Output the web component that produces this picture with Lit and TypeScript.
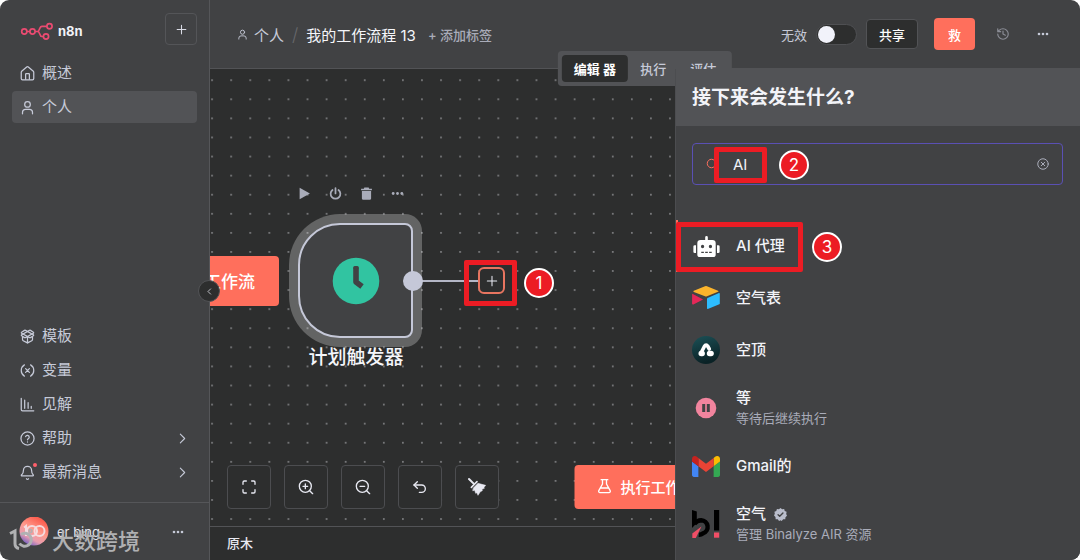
import { LitElement, html, svg, css } from "lit";
import { customElement, property } from "lit/decorators.js";

const icons: Record<string, unknown> = {
  home: svg`<path d="M15 21v-8a1 1 0 0 0-1-1h-4a1 1 0 0 0-1 1v8"/><path d="M2 10a2 2 0 0 1 .7-1.500l8-7a2 2 0 0 1 2.600 0l8 7A2 2 0 0 1 22 10v10a2 2 0 0 1-2 2H4a2 2 0 0 1-2-2z"/>`,
  user: svg`<circle cx="12" cy="7" r="4.500"/><path d="M4 22v-2a5 5 0 0 1 5-5h6a5 5 0 0 1 5 5v2"/>`,
  package: svg`<path d="M12 22v-9"/><path d="M15.200 2.200a1.700 1.700 0 0 1 1.600 0l4.600 2.900a1 1 0 0 1 0 1.700L8.800 13.800a1.900 1.900 0 0 1-1.600 0L2.600 10.900a1 1 0 0 1 0-1.700z"/><path d="M20 13v3.900a2 2 0 0 1-1.100 1.800l-6 3.100a1.900 1.900 0 0 1-1.800 0l-6-3.100A2.100 2.100 0 0 1 4 16.900V13"/><path d="M21.400 10.900a1 1 0 0 0 0-1.700L8.800 2.200a1.700 1.700 0 0 0-1.600 0L2.600 5.100a1 1 0 0 0 0 1.700l12.600 7a1.900 1.900 0 0 0 1.600 0z"/>`,
  variable: svg`<path d="M7 21s-5-3-5-9 5-9 5-9M17 3s5 3 5 9-5 9-5 9M15 9l-6 6M9 9l6 6"/>`,
  chart: svg`<path d="M2 2v18a2 2 0 0 0 2 2h18M7.500 18V5M13 18V9M18 18v-3"/>`,
  help: svg`<circle cx="12" cy="12" r="10.500"/><path d="M9 9a3 3 0 0 1 5.800 1c0 2-2.800 2.500-2.800 4M12 17.500v.1"/>`,
  bell: svg`<path d="M10.300 22a2 2 0 0 0 3.400 0M2.800 15.500A1 1 0 0 0 3.500 17.500h17a1 1 0 0 0 .7-1.700C19.400 14.500 18.500 13 18.500 8.500A6.500 6.500 0 0 0 5.500 8.500c0 4.500-1.400 6-2.700 7"/>`,
  right: svg`<path d="m8 4 8 8-8 8"/>`,
  left: svg`<path d="m15 5-7 7 7 7"/>`,
  plus: svg`<path d="M4 12h16M12 4v16"/>`,
  dots: svg`<g fill="currentColor" stroke="none"><circle cx="4" cy="12" r="2.600"/><circle cx="12" cy="12" r="2.600"/><circle cx="20" cy="12" r="2.600"/></g>`,
  history: svg`<path d="M3 12a9 9 0 1 0 9-9 9.800 9.800 0 0 0-6.700 2.700L3 8M3 3v5h5M12 7v5l4 2"/>`,
  fit: svg`<path d="M3 8V5a2 2 0 0 1 2-2h3M16 3h3a2 2 0 0 1 2 2v3M21 16v3a2 2 0 0 1-2 2h-3M8 21H5a2 2 0 0 1-2-2v-3"/>`,
  zoomIn: svg`<circle cx="11" cy="11" r="9"/><path d="m22 22-4.500-4.500M11 7.500v7M7.500 11h7"/>`,
  zoomOut: svg`<circle cx="11" cy="11" r="9"/><path d="m22 22-4.500-4.500M7.500 11h7"/>`,
  undo: svg`<path d="M8 14 3 9l5-5"/><path d="M3 9h11.500a5.500 5.500 0 0 1 0 11H11"/>`,
  broom: svg`<path d="m0 0 7 7" stroke-width="3"/><path d="M3.500 12.500 12 4" stroke-width="2.400"/><path d="M6.500 13.500 13.500 6.500 25 9.500l-2.500 3 .5 1.500-3.500 1.500.5 2-3 1.500L13.500 24.500l-1.800-4-1.700 1-1.500-4.500-2.500.5z" fill="currentColor" stroke-width="0.800"/>`,
  flask: svg`<path d="M9 2.500v6.500L3.500 19a2 2 0 0 0 1.800 3h13.400a2 2 0 0 0 1.800-3L15 9V2.500M7 2.500h10M6.500 15h11"/>`,
  play: svg`<path d="M3 1.500v21l19-10.500z" fill="currentColor" stroke="none"/>`,
  power: svg`<path d="M12 2v10" stroke-width="3.200"/><path d="M6.500 5.500a9 9 0 1 0 11 0" stroke-width="3.200"/>`,
  trash: svg`<g fill="currentColor" stroke="none"><path d="M8 1h8l1 2h5v3H2V3h5z"/><path d="M3.500 7.500h17V21a2.500 2.500 0 0 1-2.500 2.500H6A2.500 2.500 0 0 1 3.500 21z"/></g>`,
  search: svg`<circle cx="11" cy="11" r="8.500"/><path d="m22 22-5-5"/>`,
  clear: svg`<circle cx="12" cy="12" r="10.500"/><path d="m8.500 8.500 7 7M15.500 8.500l-7 7"/>`,
  verified: svg`<path fill="currentColor" stroke="none" d="m12 0 3 2.400 3.800-.5 1 3.600 3.500 1.600L22.500 11l1.500 3.400-2.800 2.600-.4 3.800-3.900.1L14.200 24 12 22.500 9.300 24 7 20.900l-3.900-.3-.4-3.800L0 14l1.500-3.400L.8 7l3.400-1.500 1.200-3.700 3.700.6z"/><path d="m7.500 12.300 3 3 6-6" stroke="#414244" stroke-width="2.500"/>`,
};

const logos: Record<string, unknown> = {
  robot: svg`<svg viewBox="0 0 640 512" width="27" height="21" fill="#fff"><path d="M32 224H64V416H32A32 32 0 0 1 0 384V256A32 32 0 0 1 32 224Zm512-48V448a64 64 0 0 1-64 64H160a64 64 0 0 1-64-64V176a80 80 0 0 1 80-80H288V32a32 32 0 0 1 64 0V96H464A80 80 0 0 1 544 176ZM264 256a40 40 0 1 0-40 40A40 40 0 0 0 264 256Zm-8 128H192v32h64Zm96 0H288v32h64ZM456 256a40 40 0 1 0-40 40A40 40 0 0 0 456 256Zm-8 128H384v32h64ZM640 256V384a32 32 0 0 1-32 32H576V224h32A32 32 0 0 1 640 256Z"/></svg>`,
  airtable: svg`<svg viewBox="0 0 28 28" width="28" height="28"><path fill="#fcb42c" d="M1.800 6.800 13 2.300a3 3 0 0 1 2 0l11 4.400c.6.300.6.900 0 1.100L15 12.300a3 3 0 0 1-2 0L1.800 7.900c-.6-.3-.6-.9 0-1.100z"/><path fill="#2dbdff" d="M15 14.800v9.500c0 .5.4.7.8.6l11.500-4.700c.4-.1.500-.4.500-.7v-9.800c0-.5-.4-.7-.8-.6l-11.500 4.800z"/><path fill="#f82b60" d="M.2 9.800v10c0 .6.500.8 1 .6l9.800-5z"/><path fill="#ba1e45" d="m.2 9.800 10.800 5.600-3.700 1.700L1 20.400z" opacity=".3"/></svg>`,
  airtop: svg`<svg viewBox="0 0 28 28" width="28" height="28"><defs><linearGradient id="sea" x1="0" y1="0" x2="0.300" y2="1"><stop offset="0" stop-color="#1c5157"/><stop offset="1" stop-color="#0a2226"/></linearGradient></defs><circle cx="14" cy="14" r="14" fill="url(#sea)"/><path d="M9 17 12.600 10a1.700 1.700 0 0 1 3 0l1.700 3" fill="none" stroke="#fff" stroke-width="3.600" stroke-linecap="round" stroke-linejoin="round"/><path d="M9.200 17.500h1" stroke="#fff" stroke-width="5.400" stroke-linecap="round"/><rect x="14.800" y="14.800" width="7" height="5.400" rx="2.700" fill="#fff"/></svg>`,
  wait: svg`<svg viewBox="0 0 28 28" width="28" height="28"><circle cx="14" cy="14" r="10.300" fill="#f1849e"/><path d="M11.700 10v8M16.300 10v8" stroke="#414244" stroke-width="3"/></svg>`,
  gmail: svg`<svg viewBox="52 42 88 66" width="28" height="21"><path fill="#4285f4" d="M58 108h14V74L52 59v43c0 3.320 2.690 6 6 6"/><path fill="#34a853" d="M120 108h14c3.320 0 6-2.690 6-6V59l-20 15"/><path fill="#fbbc04" d="M120 48v26l20-15v-8c0-7.420-8.470-11.650-14.400-7.200"/><path fill="#ea4335" d="M72 74V48l24 18 24-18v26L96 92"/><path fill="#c5221f" d="M52 51v8l20 15V48l-5.600-4.200c-5.940-4.450-14.400-.22-14.400 7.200"/></svg>`,
  binalyze: svg`<svg viewBox="0 0 28 28" width="28" height="28"><path d="M0 0 4.800 1.500V13L0 18z" fill="#000"/><path d="M2.300 14Q5 10.200 9.200 10.200a6.700 6.700 0 0 1 2 13Q9 25 6.800 24.800" fill="none" stroke="#000" stroke-width="4.400"/><path fill="#f04e66" d="M9.500 16.500.3 23.500V28h3.500z"/><path fill="#000" d="M22 0h5.200v20.500H22z"/><path fill="#f04e66" d="M22 22.500h5.200v5.200H22z"/></svg>`,
};

@customElement("ui-icon")
class UiIcon extends LitElement {
  @property() name = "";
  @property({ type: Number }) size = 16;
  @property({ type: Number }) weight = 2;
  static styles = css`
    :host { display: inline-flex; flex: none; }
    svg { display: block; overflow: visible; }
  `;
  render() {
    return html`<svg viewBox="0 0 24 24" width=${this.size} height=${this.size} fill="none" stroke="currentColor"
      stroke-width=${this.weight} stroke-linecap="round" stroke-linejoin="round" aria-hidden="true">${icons[this.name]}</svg>`;
  }
}

@customElement("side-bar")
class SideBar extends LitElement {
  static styles = css`
    :host { display: flex; flex-direction: column; box-sizing: border-box; background: #414244; border-right: 1px solid #555659; color: #c6cad8; position: relative; min-width: 0; }
    .top { display: flex; align-items: center; justify-content: space-between; padding: 13px 12px 12px 20px; }
    .brand { display: flex; align-items: center; gap: 4px; font-size: 13px; font-weight: 700; color: #f2f3f8; padding-top: 4px; }
    .add { width: 32px; height: 32px; display: grid; place-items: center; padding: 0; color: #d8dae4; background: none; border: 1px solid #545558; border-radius: 4px; }
    nav { display: flex; flex-direction: column; gap: 2px; padding: 0 12px; }
    .bottom { margin-top: auto; padding-bottom: 14px; }
    a { display: flex; align-items: center; gap: 7px; height: 32px; padding: 0 8px; border-radius: 4px; font-size: 15px; line-height: 20px; color: inherit; text-decoration: none; }
    a.active { background: #525356; }
    .mark { display: inline-flex; position: relative; }
    .new { position: absolute; right: -2px; top: -2px; width: 4px; height: 4px; border-radius: 50%; background: #ff5f6b; }
    .go { margin-left: auto; }
    .account { display: flex; align-items: center; gap: 8px; height: 57px; padding: 0 25px 0 19px; border-top: 1px solid #555659; font-size: 13px; color: #e4e6ee; }
    .more { margin-left: auto; padding: 0; border: 0; background: none; color: #c6cad8; display: flex; }
    .stamp { position: absolute; left: 9px; bottom: 4px; display: flex; align-items: center; gap: 18px; font-size: 22px; line-height: 30px; font-weight: 500; color: #b0b1b3; }
    .stamp svg { overflow: visible; }
  `;
  link(icon: string, label: string, opts: { active?: boolean; more?: boolean; fresh?: boolean } = {}) {
    return html`<a href="#" class=${opts.active ? "active" : ""}>
      <span class="mark"><ui-icon name=${icon} size="15"></ui-icon>${opts.fresh ? html`<span class="new"></span>` : ""}</span>
      <span>${label}</span>
      ${opts.more ? html`<ui-icon class="go" name="right" size="13"></ui-icon>` : ""}
    </a>`;
  }
  render() {
    return html`
      <div class="top">
        <div class="brand">
          <svg width="34" height="20" viewBox="0 0 34 20" fill="none" stroke="#ea4b71" stroke-width="1.700" aria-hidden="true">
            <circle cx="4.300" cy="10.500" r="2.600"/><circle cx="12.500" cy="10.500" r="2.600"/><circle cx="29.500" cy="5.300" r="2.600"/><circle cx="26" cy="15.500" r="2.600"/>
            <path d="M6.900 10.500h3M15.100 10.500h2.400c2.500 0 1.500-5.200 4.500-5.200h4.900M17.500 10.500c3 0 1.500 5 4.500 5h1.400"/>
          </svg>
          <span>n8n</span>
        </div>
        <button class="add" aria-label="新建"><ui-icon name="plus" size="13"></ui-icon></button>
      </div>
      <nav>${this.link("home", "概述")}${this.link("user", "个人", { active: true })}</nav>
      <nav class="bottom">
        ${this.link("package", "模板")}${this.link("variable", "变量")}${this.link("chart", "见解")}
        ${this.link("help", "帮助", { more: true })}${this.link("bell", "最新消息", { more: true, fresh: true })}
      </nav>
      <div class="account">
        <svg width="30" height="30" viewBox="0 0 30 30" aria-hidden="true">
          <defs>
            <linearGradient id="skin" x1="0.200" y1="1" x2="0.700" y2="0.100"><stop offset="0" stop-color="#5a52c8"/><stop offset="0.300" stop-color="#e79db0"/><stop offset="0.600" stop-color="#ff9a8c"/><stop offset="1" stop-color="#fb5f50"/></linearGradient>
          </defs>
          <circle cx="15" cy="14" r="14.500" fill="url(#skin)"/>
          <g fill="none" stroke="#f5e4e8" stroke-width="2" opacity="0.900"><circle cx="13" cy="14" r="5"/><circle cx="20.500" cy="14" r="5"/><path d="M5 10.500 7 9v10"/></g>
        </svg>
        <span>er bing</span>
        <button class="more" aria-label="账户菜单"><ui-icon name="dots" size="12"></ui-icon></button>
      </div>
      <div class="stamp">
        <svg width="25" height="24" viewBox="0 0 25 24" fill="none" stroke="currentColor" stroke-width="3" aria-hidden="true">
          <path d="M1 4.500 6 2v12.500a5 5 0 0 0 4 5"/><path d="M12 5.500a6.500 6.500 0 1 1-1.500 9"/><circle cx="21.500" cy="2" r="1.500" stroke-width="1.500"/>
        </svg>
        <span>大数跨境</span>
      </div>`;
  }
}

@customElement("top-bar")
class TopBar extends LitElement {
  static styles = css`
    :host { display: flex; align-items: center; justify-content: space-between; box-sizing: border-box; height: 69px; padding: 0 31px 0 27px; background: #414244; border-bottom: 1px solid #525356; color: #c6cad8; font-size: 13px; }
    .crumbs, .actions { display: flex; align-items: center; }
    .crumbs { gap: 8px; font-size: 15px; }
    .crumbs a { display: flex; align-items: center; gap: 6px; color: inherit; text-decoration: none; }
    .slash { color: #66676b; font-size: 18px; font-weight: 300; }
    h1 { margin: 0; font-size: 15px; font-weight: 400; color: #f5f6fa; }
    .tag { margin-left: 4px; padding: 0; border: 0; background: none; font: inherit; font-size: 13px; font-weight: 500; color: #a9acb9; }
    label { display: flex; align-items: center; gap: 9px; }
    input { appearance: none; box-sizing: border-box; margin: 0; width: 41px; height: 21px; padding: 1px; border: 1px solid #4f5053; border-radius: 12px; background: #2d2e2e; display: flex; }
    input::before { content: ""; width: 17px; height: 17px; border-radius: 50%; background: #f1f2fa; }
    .share, .save { box-sizing: border-box; padding: 0 12px; font: inherit; font-weight: 500; color: #fff; border-radius: 4px; }
    .share { height: 30px; margin-left: 9px; border: 1px solid #525356; background: #2d2e2e; }
    .save { height: 32px; margin-left: 16px; padding: 0 14px; border: 0; background: #ff6f5c; }
    .plain { display: flex; padding: 0; border: 0; background: none; color: inherit; margin-left: 27px; }
    .history { margin-left: 21px; color: #8b8d96; }
  `;
  render() {
    return html`
      <div class="crumbs">
        <a href="#"><ui-icon name="user" size="11"></ui-icon><span>个人</span></a>
        <span class="slash">/</span>
        <h1>我的工作流程 13</h1>
        <button class="tag">+ 添加标签</button>
      </div>
      <div class="actions">
        <label>无效<input type="checkbox" role="switch"></label>
        <button class="share">共享</button>
        <button class="save">救</button>
        <button class="plain history" aria-label="历史"><ui-icon name="history" size="14"></ui-icon></button>
        <button class="plain" aria-label="更多"><ui-icon name="dots" size="12"></ui-icon></button>
      </div>`;
  }
}

@customElement("flow-canvas")
class FlowCanvas extends LitElement {
  static styles = css`
    :host { display: flex; flex-direction: column; justify-content: flex-end; position: relative; overflow: hidden; background: #2d2e2e; min-height: 0; }
    .grid { position: absolute; inset: 0; width: 100%; height: 100%; }
    button { font-family: inherit; }
    .start { position: absolute; left: -55px; top: 187px; width: 124px; height: 50px; padding: 0 24px 2px 0; border: 0; border-radius: 4px; background: #ff6f5c; color: #fff; font-size: 17px; font-weight: 500; text-align: right; }
    .tools { position: absolute; left: 88px; top: 118px; display: flex; gap: 18px; }
    .tools button { padding: 0; border: 0; background: none; display: flex; color: #a9acb9; }
    .node { position: absolute; left: 88px; top: 154px; width: 115px; height: 115px; box-sizing: border-box; border: 2px solid #c5c8d8; border-radius: 42px 8px 8px 42px; background: #414244; box-shadow: 0 0 0 9px rgba(255, 255, 255, 0.26); display: grid; place-items: center; }
    .name { position: absolute; left: 66px; top: 276px; width: 160px; text-align: center; font-size: 19px; line-height: 26px; font-weight: 500; color: #f5f6fa; }
    .wire { position: absolute; left: 212px; top: 211px; width: 56px; height: 2px; background: #b4b7c6; }
    .port { position: absolute; left: 193px; top: 202px; width: 20px; height: 20px; border-radius: 50%; background: #c5c8d8; }
    .next { position: absolute; left: 268px; top: 198px; width: 27px; height: 27px; box-sizing: border-box; padding: 0; display: grid; place-items: center; border: 2px solid #e87560; border-radius: 6px; background: #2d2e2e; color: #e8e9f2; }
    .controls { position: relative; display: flex; gap: 13px; padding: 0 17px 17px; }
    .controls button { box-sizing: border-box; width: 44px; height: 44px; padding: 0; display: grid; place-items: center; border: 1px solid #4c4d50; border-radius: 4px; background: #2d2e2e; color: #e8e9f2; }
    .run { position: absolute; left: 50%; bottom: 17px; transform: translateX(-50%); display: flex; align-items: center; gap: 8px; height: 44px; padding: 0 20px 2px 22px; border: 0; border-radius: 4px; background: #ff6f5c; color: #fff; font-size: 15px; font-weight: 500; white-space: nowrap; }
  `;
  render() {
    return html`
      <svg class="grid" aria-hidden="true">
        <defs><pattern id="dots" x="1.200" y="10.300" width="19.080" height="19.080" patternUnits="userSpaceOnUse"><circle cx="0.900" cy="0.900" r="0.850" fill="#96979a"/></pattern></defs>
        <rect width="100%" height="100%" fill="url(#dots)"/>
      </svg>
      <button class="start">工作流</button>
      <div class="tools">
        ${["play", "power", "trash", "dots"].map((n) => html`<button aria-label=${n}><ui-icon name=${n} size="13"></ui-icon></button>`)}
      </div>
      <div class="node">
        <svg width="48" height="48" viewBox="0 0 48 48" aria-hidden="true"><circle cx="24" cy="24" r="23.300" fill="#31c4a1"/><path d="M24 11v14l6 4.500" fill="none" stroke="#414244" stroke-width="5.600" stroke-linejoin="round"/><path d="M22.700 10.500h2.600" stroke="#414244" stroke-width="3" stroke-linecap="round"/></svg>
      </div>
      <div class="name">计划触发器</div>
      <div class="wire"></div>
      <div class="port"></div>
      <button class="next" aria-label="添加节点"><ui-icon name="plus" size="14" weight="1.800"></ui-icon></button>
      <call-out n="1"></call-out>
      <div class="controls">
        ${["fit", "zoomIn", "zoomOut", "undo", "broom"].map((n) => html`<button aria-label=${n}><ui-icon name=${n} size="16"></ui-icon></button>`)}
      </div>
      <button class="run"><ui-icon name="flask" size="16"></ui-icon>执行工作流</button>`;
  }
}

@customElement("call-out")
class CallOut extends LitElement {
  @property() n = "";
  static styles = css`
    :host { position: absolute; display: flex; align-items: center; gap: 8px; pointer-events: none; }
    :host([n="1"]) { left: 254px; top: 191px; gap: 7px; }
    :host([n="2"]) { left: 38px; top: 78px; gap: 12px; }
    :host([n="3"]) { left: 0; top: 153px; gap: 9px; }
    .frame { box-sizing: border-box; width: 53px; height: 46px; border: 5px solid #ec1c24; border-radius: 2px; }
    :host([n="2"]) .frame { height: 36px; }
    :host([n="3"]) .frame { width: 127px; height: 50px; }
    .number { box-sizing: border-box; width: 30px; height: 30px; border: 2px solid #fff; border-radius: 50%; background: #ec1c24; color: #fff; font-size: 17px; line-height: 26px; text-align: center; }
  `;
  render() {
    return html`<span class="frame"></span><span class="number">${this.n}</span>`;
  }
}

@customElement("node-panel")
class NodePanel extends LitElement {
  static styles = css`
    :host { display: flex; flex-direction: column; box-sizing: border-box; background: #414244; color: #f2f3f8; border-left: 1px solid #4c4d50; }
    h2 { margin: 0; height: 57px; padding: 0 16px; font-size: 19px; line-height: 58px; font-weight: 700; background: #525356; }
    .search { display: flex; align-items: center; gap: 15px; margin: 17px 17px 35px 16px; height: 42px; box-sizing: border-box; padding: 0 13px; border: 1px solid #5a50b4; border-radius: 4px; }
    .lens { color: #ff6f5c; display: flex; }
    input { flex: 1; min-width: 0; padding: 0; border: 0; outline: 0; background: none; color: #f2f3f8; font: inherit; font-size: 15px; }
    .clear { display: flex; padding: 0; border: 0; background: none; color: #a9acb9; }
    ul { margin: 0; padding: 0; list-style: none; }
    a { display: grid; grid-template-columns: 28px 1fr; align-items: center; gap: 16px; min-height: 52px; box-sizing: border-box; padding: 0 16px; color: inherit; text-decoration: none; }
    .tall { min-height: 64px; }
    .active { box-shadow: inset 2px 0 #ff6f5c; }
    .logo { display: grid; place-items: center; }
    .logo svg { display: block; }
    .name { display: flex; align-items: center; gap: 8px; font-size: 15px; line-height: 20px; font-weight: 500; }
    .name ui-icon { color: #b9bdcb; }
    .note { display: block; font-size: 13px; line-height: 20px; color: #a9acb9; }
  `;
  items = [
    { logo: "robot", name: "AI 代理", active: true },
    { logo: "airtable", name: "空气表" },
    { logo: "airtop", name: "空顶" },
    { logo: "wait", name: "等", note: "等待后继续执行" },
    { logo: "gmail", name: "Gmail的" },
    { logo: "binalyze", name: "空气", note: "管理 Binalyze AIR 资源", verified: true },
  ];
  render() {
    return html`
      <h2>接下来会发生什么?</h2>
      <div class="search">
        <label class="lens" for="query" aria-label="搜索"><ui-icon name="search" size="12"></ui-icon></label>
        <input id="query" type="text" value="AI">
        <button class="clear" aria-label="清除"><ui-icon name="clear" size="12"></ui-icon></button>
      </div>
      <ul>
        ${this.items.map((i) => html`<li><a href="#" class="${i.note ? "tall" : ""} ${i.active ? "active" : ""}">
          <span class="logo">${logos[i.logo]}</span>
          <span>
            <span class="name">${i.name}${i.verified ? html`<ui-icon name="verified" size="13"></ui-icon>` : ""}</span>
            ${i.note ? html`<span class="note">${i.note}</span>` : ""}
          </span>
        </a></li>`)}
      </ul>
      <call-out n="2"></call-out>
      <call-out n="3"></call-out>`;
  }
}

@customElement("app-root")
class AppRoot extends LitElement {
  static styles = css`
    :host { display: block; height: 100vh; background: #fff; font-family: Inter, "Noto Sans CJK SC", sans-serif; }
    .app { display: grid; grid-template-columns: 210px minmax(0, 1fr); height: 100%; border-radius: 9px; overflow: hidden; position: relative; }
    main { position: relative; display: grid; grid-template-rows: auto minmax(0, 1fr) auto; min-width: 0; }
    .tabs { position: absolute; top: 51px; left: 50%; transform: translateX(-50%); display: flex; padding: 4px; border-radius: 4px; background: #525356; }
    .tabs button { height: 27px; padding: 0 12px; border: 0; border-radius: 4px; background: none; font: inherit; font-size: 13px; font-weight: 500; color: #c6cad8; white-space: nowrap; }
    .tabs .on { background: #2d2e2e; color: #fff; font-weight: 600; }
    .log { border-top: 1px solid #525356; background: #2d2e2e; padding: 0 17px; font-size: 13px; line-height: 33px; font-weight: 500; color: #e8e9f2; }
    node-panel { position: absolute; top: 69px; right: 0; bottom: 0; width: 405px; overflow: hidden; }
    .collapse { position: absolute; left: 198px; top: 280px; width: 22px; height: 22px; box-sizing: border-box; padding: 0; display: grid; place-items: center; border: 1px solid #525356; border-radius: 50%; background: #2d2e2e; color: #e8e9f2; }
  `;
  render() {
    return html`
      <div class="app">
        <side-bar></side-bar>
        <main>
          <top-bar></top-bar>
          <flow-canvas></flow-canvas>
          <footer class="log">原木</footer>
          <div class="tabs"><button class="on">编辑 器</button><button>执行</button><button>评估</button></div>
          <node-panel></node-panel>
        </main>
        <button class="collapse" aria-label="收起"><ui-icon name="left" size="9"></ui-icon></button>
      </div>`;
  }
}
